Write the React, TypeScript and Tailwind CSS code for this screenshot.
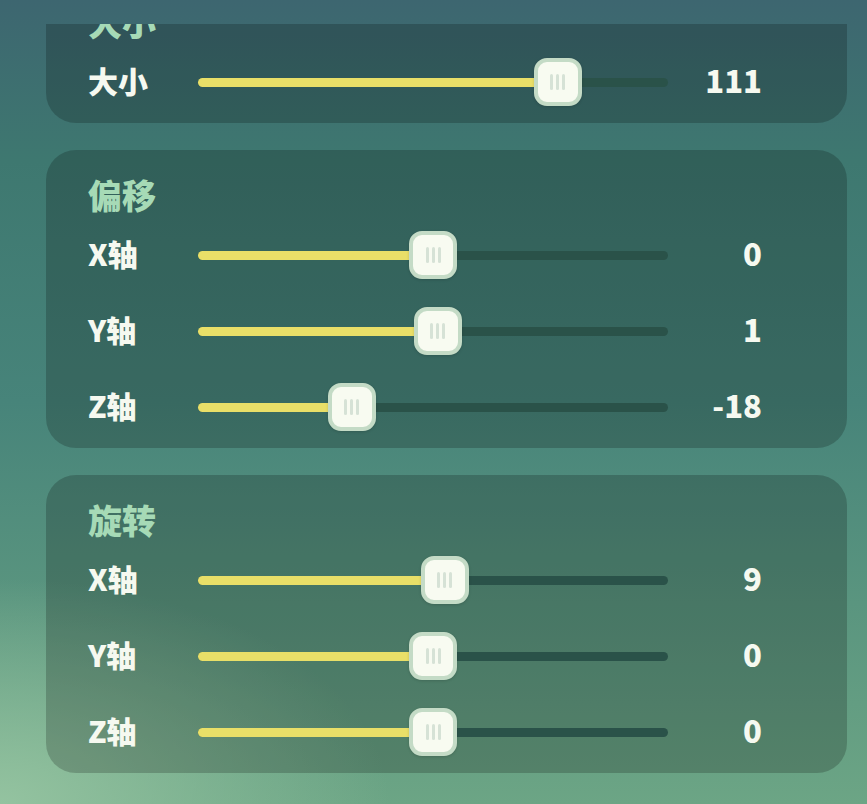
import React from "react";

type Row = { label: string; value: number; min: number; max: number };
type Section = { title: string; rows: Row[] };

const sections: Section[] = [
  { title: "大小", rows: [{ label: "大小", value: 111, min: 0, max: 145 }] },
  {
    title: "偏移",
    rows: [
      { label: "X轴", value: 0, min: -52, max: 52 },
      { label: "Y轴", value: 1, min: -52, max: 52 },
      { label: "Z轴", value: -18, min: -52, max: 52 },
    ],
  },
  {
    title: "旋转",
    rows: [
      { label: "X轴", value: 9, min: -180, max: 180 },
      { label: "Y轴", value: 0, min: -180, max: 180 },
      { label: "Z轴", value: 0, min: -180, max: 180 },
    ],
  },
];

function Slider({ row }: { row: Row }) {
  const pct = ((row.value - row.min) / (row.max - row.min)) * 100;
  return (
    <div className="flex h-[48px] items-center">
      <div className="w-[110px] shrink-0 pb-[5px] text-[30px] font-black leading-none text-[#f6f9f0]">
        {row.label}
      </div>
      <div className="relative h-[9px] w-[470px] shrink-0 rounded-full bg-[#2a5249]">
        <div
          className="absolute left-0 top-0 h-full rounded-full bg-[#e9df68]"
          style={{ width: `${pct}%` }}
        />
        <div
          className="absolute top-1/2 flex h-[48px] w-[48px] -translate-x-1/2 -translate-y-1/2 items-center justify-center gap-[3px] rounded-[13px] border-[4px] border-[#c4dbc6] bg-[#f8fbf1] shadow-[0_1px_3px_rgba(0,0,0,0.15)]"
          style={{ left: `${pct}%` }}
        >
          <span className="h-[16px] w-[3px] rounded-full bg-[#d6e2d6]" />
          <span className="h-[16px] w-[3px] rounded-full bg-[#d6e2d6]" />
          <span className="h-[16px] w-[3px] rounded-full bg-[#d6e2d6]" />
        </div>
      </div>
      <div className="w-[94px] shrink-0 pb-[5px] text-right text-[31px] font-black leading-none text-[#f6f9f0]">
        {row.value}
      </div>
    </div>
  );
}

function Card({ section }: { section: Section }) {
  return (
    <div className="rounded-[30px] bg-black/20 pb-[17px] pl-[42px] pt-[26px]">
      <div className="h-[40px] pb-[3px] text-[34px] font-black leading-[37px] text-[#a6dab6]">
        {section.title}
      </div>
      <div className="mt-[15px] flex flex-col gap-[28px]">
        {section.rows.map((r, i) => (
          <Slider key={i} row={r} />
        ))}
      </div>
    </div>
  );
}

export default function App() {
  return (
    <div
      className="h-[804px] w-[867px] overflow-hidden bg-[radial-gradient(ellipse_45%_28%_at_0%_100%,#94c3a0_0%,rgba(148,195,160,0)_100%),linear-gradient(180deg,#3d6670_0%,#3e7870_20%,#47847a_50%,#5a957f_75%,#6ca585_100%)]"
      style={{ fontFamily: '"Noto Sans CJK SC", "Noto Sans", sans-serif' }}
    >
      <div className="mt-[24px] h-[780px] overflow-hidden">
        <div className="ml-[46px] mt-[-47px] flex w-[801px] flex-col gap-[27px]">
          {sections.map((s, i) => (
            <Card key={i} section={s} />
          ))}
        </div>
      </div>
    </div>
  );
}
